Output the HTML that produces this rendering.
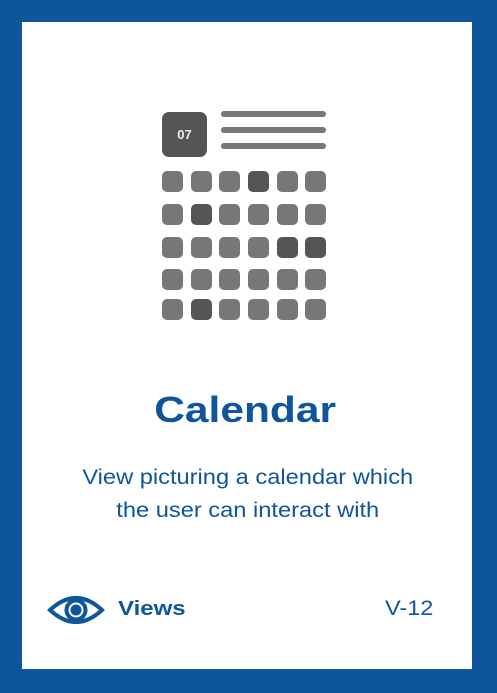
<!DOCTYPE html>
<html><head><style>
body{margin:0;width:497px;height:693px;background:#0e559c;position:relative;font-family:"Liberation Sans",sans-serif;overflow:hidden}
.card{position:absolute;left:22px;top:22px;width:450px;height:647px;background:#fff}
.a{position:absolute}
.c{position:absolute;width:21px;height:21px;border-radius:5px;background:#777}
.d{background:#555}
.l{position:absolute;left:221px;width:105px;height:6px;border-radius:3px;background:#777}
</style></head><body>
<div class="card"></div>
<div class="a" style="left:162px;top:112px;width:45px;height:45px;border-radius:7px;background:#555;color:#eee;font-weight:bold;font-size:13px;line-height:45px;text-align:center">07</div>
<div class="l" style="top:111px"></div>
<div class="l" style="top:127px"></div>
<div class="l" style="top:143px"></div>
<div id="g"></div>
<script>
var xs=[162,191,219,248,277,305],ys=[171,204,237,269,299],dk={"0,3":1,"1,1":1,"2,4":1,"2,5":1,"4,1":1},h="";
for(var r=0;r<5;r++)for(var c=0;c<6;c++)h+='<div class="c'+(dk[r+","+c]?" d":"")+'" style="left:'+xs[c]+'px;top:'+ys[r]+'px"></div>';
document.getElementById("g").innerHTML=h;
</script>
<div class="a" style="left:-4px;width:497px;top:389px;text-align:center;font-size:36px;font-weight:bold;color:#0e559c;transform:scaleX(1.18);transform-origin:245px 0">Calendar</div>
<div class="a" style="left:-1px;width:497px;top:461px;text-align:center;font-size:21.5px;line-height:33px;color:#0e559c;transform:scaleX(1.1);transform-origin:246px 0">View picturing a calendar which<br>the user can interact with</div>
<svg class="a" style="left:47px;top:594px" width="58" height="32" viewBox="0 0 58 32">
<path d="M3 16 Q29 -8 55 16 Q29 40 3 16 Z" fill="none" stroke="#0e559c" stroke-width="4" stroke-linejoin="miter"/>
<circle cx="29" cy="16" r="9.5" fill="none" stroke="#0e559c" stroke-width="4"/>
<circle cx="29" cy="16" r="5.5" fill="#0e559c"/>
</svg>
<div class="a" style="left:118px;top:598px;font-size:20px;font-weight:bold;color:#0e559c;transform:scaleX(1.2);transform-origin:0 0">Views</div>
<div class="a" style="left:385px;top:597px;font-size:21px;color:#0e559c;transform:scaleX(1.12);transform-origin:0 0">V-12</div>
</body></html>
